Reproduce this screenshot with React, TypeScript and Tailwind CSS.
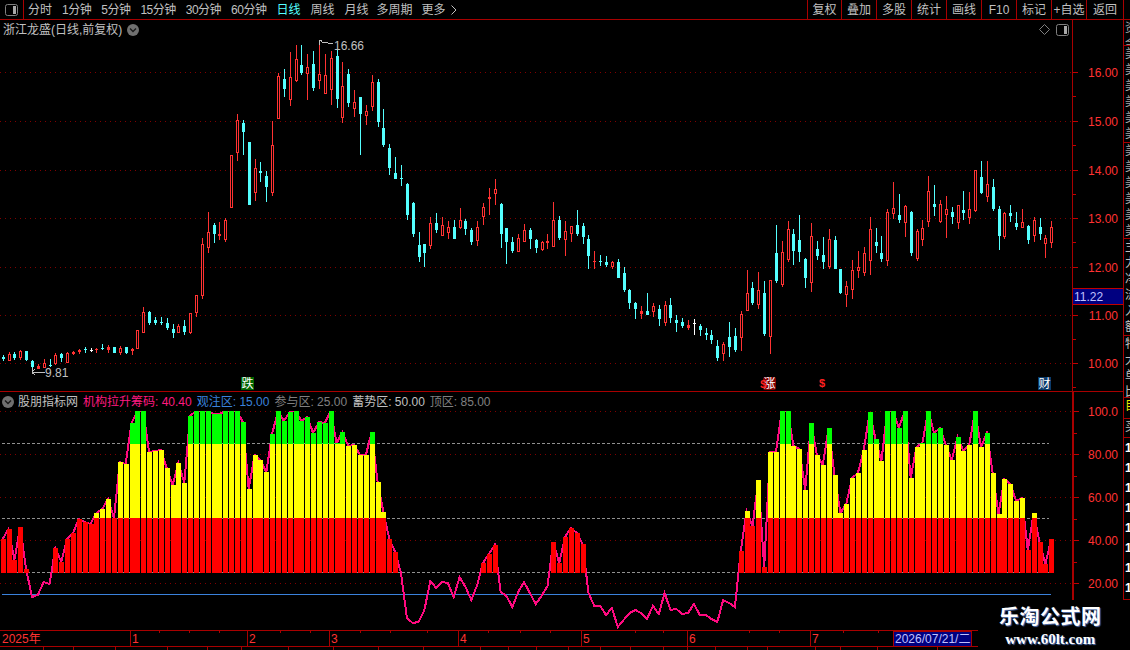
const STEP = 5.858;
const xAt = (i: number) => 2.67 + STEP * i;

type Candle = [number, number, number, number, number]; // wick top, body top, body bottom, wick bottom, 0 cyan / 1 red / 2 white

// traced off the chart, measured at 3x, each batch with its own y offset
const batchA: Candle[] = [
  [945,952,957,962,0],[937,942,962,962,1],[936,942,955,960,0],[930,934,955,960,1],[932,934,960,963,0],[960,963,980,1000,0],
  [972,978,986,988,1],[958,970,983,985,1],[958,975,977,980,0],[940,946,971,974,1],[938,942,954,966,0],[936,940,968,970,1],
  [932,935,941,945,1],[926,929,935,941,1],[922,926,931,938,0],[925,930,931,936,2],[925,926,930,938,1],[912,925,927,930,0],
  [916,921,929,938,1],[921,921,939,940,0],[919,925,939,945,1],[921,922,938,942,0],[925,926,932,945,1],[870,870,926,926,1],
  [801,817,878,878,1],[813,816,849,855,0],[832,840,849,854,0],[831,846,848,856,0],[835,850,864,870,0],[852,867,879,893,0],
  [853,859,878,880,1],[841,858,876,884,0],[820,820,880,882,1],[766,766,820,830,1],[594,612,767,777,1],[516,577,623,638,1],
  [549,555,582,608,0],[546,582,587,600,1],[535,540,600,605,1],[346,346,503,503,1],[222,240,338,362,1],[240,250,276,344,0],
  [306,306,495,495,0],[357,385,458,482,1],[366,393,399,426,0],[393,408,441,486,0],[243,316,458,467,1],[98,109,236,236,1],
  [87,117,147,171,0],[36,112,179,198,1],[15,58,124,126,1],[15,75,100,105,0],[42,82,101,180,1],[33,72,144,153,0],
  [5,103,122,147,1],[42,106,161,162,1],[33,54,150,195,1],[30,48,177,204,0],[67,139,233,249,1],[87,102,189,201,0],
  [150,186,206,231,1],[171,171,222,345,0],[195,213,228,255,1],[105,127,201,213,1],[117,126,246,261,0],[207,264,315,321,0],
  [312,324,384,405,0],[351,399,417,417,0],
];
const batchB: Candle[] = [
  [-15,24,27,48,0],[39,42,135,150,0],[96,99,192,201,0],[186,225,261,276,0],[222,222,249,291,0],[141,159,228,237,1],
  [129,159,180,189,0],[141,165,198,198,1],[153,171,189,207,1],[150,171,207,207,0],[114,150,174,177,1],[147,153,177,195,0],
  [174,180,216,225,0],[153,171,213,228,1],[99,111,141,165,1],[54,81,87,135,1],[27,57,72,105,1],[99,102,192,234,0],
  [174,174,216,282,0],[201,216,243,249,0],[192,204,246,246,1],[162,180,216,216,1],[174,180,207,237,0],[207,210,234,249,0],
  [213,216,240,243,1],[192,213,219,237,1],[96,150,231,231,1],[138,150,204,210,0],[153,183,210,258,1],[168,168,192,216,1],
  [120,165,192,198,0],[159,168,201,222,0],[195,207,258,297,0],[243,273,276,297,1],[255,273,276,288,0],[258,276,285,291,0],
  [273,276,291,297,1],[267,276,324,324,0],[291,309,360,366,0],[357,360,399,417,0],[396,399,417,447,0],[408,423,432,447,1],
  [369,423,435,435,0],[399,408,426,441,1],[405,417,447,468,0],[393,405,459,468,1],[384,405,444,459,0],[435,450,459,486,0],
  [444,456,468,474,0],[450,465,474,480,1],[447,459,462,495,2],[462,468,480,498,0],[474,489,495,510,0],[480,495,510,522,0],
  [510,528,564,573,0],[516,522,552,573,1],[456,501,531,561,0],[474,498,540,546,0],[423,432,504,543,1],[300,369,423,423,1],
  [336,354,399,405,0],[306,360,405,417,1],[333,369,492,498,0],[330,330,501,552,1],
];
const batchC: Candle[] = [
  [225,309,393,399,0],[273,306,405,411,1],[213,237,330,336,1],[237,252,303,345,0],[195,270,306,336,0],[324,327,384,414,0],
  [219,258,399,426,1],[273,297,318,330,0],[261,315,336,357,0],[237,267,351,357,1],[258,270,357,357,0],[357,357,429,432,0],
  [393,408,435,471,1],[330,360,421,447,1],[303,351,363,384,1],[291,309,369,378,1],[201,237,333,375,1],[234,276,288,309,0],
  [258,309,327,336,0],[177,186,333,348,1],[96,174,192,207,1],[132,195,210,219,0],[165,168,219,261,1],[183,186,309,318,0],
  [237,243,327,333,1],[210,234,270,288,1],[78,124,216,231,1],[105,162,171,198,0],[150,162,216,219,1],[138,177,195,264,1],
  [171,186,201,222,0],[165,165,219,237,1],[123,180,189,210,0],[126,177,204,222,1],[60,60,183,186,1],[33,81,129,132,0],
  [33,102,141,156,1],[87,111,177,183,0],[168,177,258,300,0],[186,189,261,267,1],[165,189,198,216,0],[186,219,231,240,0],
  [177,216,234,234,1],[225,228,270,282,0],[201,210,258,276,1],[204,231,252,270,0],[255,264,282,324,1],[213,231,279,294,1],
];

const toPage = (list: Candle[], off: number): Candle[] =>
  list.map(([a, b, c, d, k]) => [off + a / 3, off + b / 3, off + c / 3, off + d / 3, k].map(Math.round) as Candle);
const candles = [...toPage(batchA, 40), ...toPage(batchB, 170), ...toPage(batchC, 150)];

// indicator value per day, as page y (411 = 100, 572.5 = 25)
const flow = [
  539,529,560,527,569,597,595,582,584,548,562,539,533,519,522,524,513,509,499,518,
  462,464,423,411,411,452,451,450,468,485,463,483,416,411,411,411,414,414,411,411,
  411,422,489,455,460,472,434,411,421,412,411,421,417,433,422,423,411,443,432,446,
  445,455,455,432,482,512,539,552,573,618,623,622,610,581,588,582,583,597,577,587,
  600,585,563,554,545,592,596,607,592,582,593,604,596,586,542,563,537,528,533,544,
  593,606,606,615,608,627,620,613,610,613,619,606,614,593,610,609,614,613,604,615,
  615,619,622,600,603,607,551,511,526,480,567,452,452,411,411,446,449,490,423,455,
  465,428,475,513,504,478,473,450,412,439,461,411,411,428,411,478,447,443,411,433,
  428,445,460,437,451,445,411,447,433,473,514,479,484,501,498,550,513,542,564,539,
];

const priceGrid = [72, 121, 170, 218, 267, 315, 363];
const flowGrid = [411, 454, 497, 540, 583];

function PanelIcon() {
  return (
    <svg width="13" height="12" viewBox="0 0 13 12" shapeRendering="crispEdges">
      <rect x="8" y="2" width="3" height="8" fill="#a8a8a8" />
      <rect x="0.5" y="0.5" width="12" height="11" rx="2" fill="none" stroke="#808080" shapeRendering="auto" />
    </svg>
  );
}

function ChevronDot() {
  return (
    <svg width="12" height="12" viewBox="0 0 12 12">
      <circle cx="6" cy="6" r="6" fill="#707070" />
      <path d="M3 4.5 L6 7.5 L9 4.5" fill="none" stroke="#1a1a1a" strokeWidth="1.4" />
    </svg>
  );
}

function Toolbar() {
  const periods = [
    { label: '分时', cls: '' },
    { label: '1分钟', cls: 'tracking-[-0.5px]' },
    { label: '5分钟', cls: 'tracking-[-0.5px]' },
    { label: '15分钟', cls: 'tracking-[-0.5px]' },
    { label: '30分钟', cls: 'tracking-[-0.5px]' },
    { label: '60分钟', cls: 'tracking-[-0.5px]' },
    { label: '日线', cls: 'text-[#54ffff]' },
    { label: '周线', cls: '' },
    { label: '月线', cls: '' },
    { label: '多周期', cls: '-ml-[2px]' },
    { label: '更多', cls: '-ml-[1px]' },
  ];
  const tools = ['复权', '叠加', '多股', '统计', '画线', 'F10', '标记', '+自选'];
  return (
    <div className="flex h-[20px] justify-between border-b border-[#a80000] text-[#c0c0c0]">
      <div className="flex items-center">
        <div className="flex h-[19px] w-[24px] items-center justify-center border-r border-[#a80000]">
          <PanelIcon />
        </div>
        <div className="flex items-center gap-[10px] pl-[4px]">
          {periods.map((p) => (
            <span key={p.label} className={p.cls}>{p.label}</span>
          ))}
          <svg width="6" height="10" viewBox="0 0 6 10" className="-ml-[5px]">
            <path d="M0.5 0.5 L5 5 L0.5 9.5" fill="none" stroke="#c0c0c0" />
          </svg>
        </div>
      </div>
      <div className="flex">
        {tools.map((t, i) => (
          <div
            key={t}
            className={`flex items-center justify-center border-l border-[#a80000] ${i === 0 ? 'w-[34px]' : 'w-[35px]'}`}
          >
            {t}
          </div>
        ))}
        <div className="flex w-[37px] items-center justify-center border-l border-[#a80000]">返回</div>
        <div className="w-[7px] border-l border-[#a80000]" />
      </div>
    </div>
  );
}

function CandleMark({ c, i }: { c: Candle; i: number }) {
  const [wt, bt, bb, wb, kind] = c;
  const x0 = Math.round(xAt(i)) - 1;
  const color = kind === 1 ? '#ff3232' : kind === 2 ? '#ffffff' : '#54ffff';
  const h = Math.max(bb - bt, 1);
  if (kind === 1 && h > 3) {
    return (
      <g>
        <rect x={x0 + 1} y={wt} width="1" height={Math.max(bt - wt, 0)} fill={color} />
        <rect x={x0 + 1} y={bb} width="1" height={Math.max(wb - bb, 0)} fill={color} />
        <rect x={x0 + 0.5} y={bt + 0.5} width="2" height={h - 1} fill="#000" stroke={color} />
      </g>
    );
  }
  return (
    <g>
      <rect x={x0 + 1} y={wt} width="1" height={Math.max(wb - wt, 1)} fill={color} />
      <rect x={x0} y={bt} width="3" height={h} fill={color} />
    </g>
  );
}

function PricePanel() {
  return (
    <div className="relative h-[372px] border-b border-[#a80000]">
      <div className="flex h-[19px] items-center justify-between pl-[3px] pr-[3px] text-[#c0c0c0]">
        <div className="flex items-center gap-[5px]">
          <span>浙江龙盛(日线,前复权)</span>
          <ChevronDot />
        </div>
        <div className="flex items-center gap-[6px]">
          <svg width="11" height="11" viewBox="0 0 11 11">
            <path d="M5.5 0.5 L10.5 5.5 L5.5 10.5 L0.5 5.5 Z" fill="none" stroke="#808080" />
          </svg>
          <PanelIcon />
        </div>
      </div>
      <svg className="block" width="1072" height="352" viewBox="0 39 1072 352" shapeRendering="crispEdges">
        {priceGrid.map((y) => (
          <line key={y} x1="0" x2="1072" y1={y + 0.5} y2={y + 0.5} stroke="#800000" strokeDasharray="1 4" />
        ))}
        {candles.map((c, i) => (
          <CandleMark key={i} c={c} i={i} />
        ))}
        <path d="M319.5 45 V40 M319.5 40 H322 M320 40 L323 43 M323 42 L333 44" fill="none" stroke="#c0c0c0" />
        <text x="334" y="50" fill="#c0c0c0" fontSize="12">16.66</text>
        <path d="M32.5 368 V374 M32 372 H45 M32 372 L35 369 M32 372 L35 375" fill="none" stroke="#c0c0c0" />
        <text x="45" y="377" fill="#c0c0c0" fontSize="12">9.81</text>
      </svg>
      <span className="absolute left-[241px] top-[357px] flex h-[13px] w-[13px] items-center justify-center bg-[#006400] text-white">跌</span>
      <span className="absolute left-[763px] top-[357px] flex h-[13px] w-[13px] items-center justify-center rounded-[2px] bg-[#800000] text-white">涨</span>
      <span className="absolute left-[760px] top-[358px] text-[10px] font-bold leading-[13px] text-[#ff2020]">S</span>
      <span className="absolute left-[819px] top-[357px] text-[11px] font-bold leading-[13px] text-[#ff2020]">$</span>
      <span className="absolute left-[1038px] top-[357px] flex h-[13px] w-[13px] items-center justify-center bg-[#0a3a6a] text-white">财</span>
    </div>
  );
}

function FlowPanel() {
  const points = flow.map((y, i) => `${xAt(i).toFixed(1)},${y}`).join(' ');
  return (
    <div>
      <div className="flex h-[19px] items-center gap-[5px] pl-[2px] text-[#c0c0c0]">
        <ChevronDot />
        <span className="-ml-[1px]">股朋指标网</span>
        <span className="text-[#ff1a80]">机构拉升筹码: 40.40</span>
        <span className="text-[#3a82dc]">观注区: 15.00</span>
        <span className="text-[#808080]">参与区: 25.00</span>
        <span>蓄势区: 50.00</span>
        <span className="text-[#808080]">顶区: 85.00</span>
      </div>
      <svg className="block" width="1072" height="219" viewBox="0 411 1072 219" shapeRendering="crispEdges">
        {flowGrid.map((y) => (
          <line key={y} x1="0" x2="1072" y1={y + 0.5} y2={y + 0.5} stroke="#800000" strokeDasharray="1 4" />
        ))}
        {[443, 518, 572].map((y) => (
          <line key={y} x1="2" x2="1049" y1={y + 0.5} y2={y + 0.5} stroke="#909090" strokeDasharray="3 2" />
        ))}
        <line x1="2" x2="1051" y1="594.5" y2="594.5" stroke="#3a82dc" />
        <polyline points={points} fill="none" stroke="#ff0a80" strokeWidth="2" />
        {flow.map((y, i) => {
          if (y >= 573) return null;
          const x = Math.round(xAt(i)) - 2;
          return (
            <g key={i}>
              <rect x={x} y={Math.max(y, 518)} width="5" height={573 - Math.max(y, 518)} fill="#ff0000" />
              {y < 518 && <rect x={x} y={Math.max(y, 444)} width="5" height={518 - Math.max(y, 444)} fill="#ffff00" />}
              {y < 444 && <rect x={x} y={y} width="5" height={444 - y} fill="#00ff00" />}
            </g>
          );
        })}
      </svg>
    </div>
  );
}

function TimeAxis() {
  const months = [
    { x: 130, label: '1' },
    { x: 247, label: '2' },
    { x: 329, label: '3' },
    { x: 458, label: '4' },
    { x: 581, label: '5' },
    { x: 687, label: '6' },
    { x: 810, label: '7' },
  ];
  const minor = [159, 189, 219, 280, 310, 360, 390, 427, 488, 520, 550, 635, 663, 749, 779, 843, 878];
  const lower = [43, 73, 115, 167, 207, 241, 288, 333, 378, 423, 480, 508, 536, 568, 600, 630, 663, 687, 715, 747, 767, 815, 840, 877, 937];
  return (
    <svg className="block" width="1072" height="20" viewBox="0 630 1072 20" shapeRendering="crispEdges">
      <line x1="0" x2="978" y1="630.5" y2="630.5" stroke="#a80000" />
      <line x1="0" x2="978" y1="646.5" y2="646.5" stroke="#a80000" />
      {minor.map((x) => (
        <line key={x} x1={x + 0.5} x2={x + 0.5} y1="630" y2="633" stroke="#a80000" />
      ))}
      {lower.map((x) => (
        <line key={x} x1={x + 0.5} x2={x + 0.5} y1="646" y2="650" stroke="#a80000" />
      ))}
      <text x="2" y="643" fill="#ff3232" fontSize="12">2025年</text>
      {months.map((m) => (
        <g key={m.label}>
          <line x1={m.x + 0.5} x2={m.x + 0.5} y1="630" y2="646" stroke="#a80000" />
          <text x={m.x + 2} y="643" fill="#ff3232" fontSize="12">{m.label}</text>
        </g>
      ))}
      <rect x="893.5" y="631.5" width="78" height="15" fill="#000080" stroke="#a80000" />
      <text x="895" y="643" fill="#c0c0ff" fontSize="12">2026/07/21/二</text>
    </svg>
  );
}

function AxisColumn() {
  const prices = ['16.00', '15.00', '14.00', '13.00', '12.00', '11.00', '10.00'];
  const flows = ['100.0', '80.00', '60.00', '40.00', '20.00'];
  return (
    <div className="relative w-[51px]">
      <div className="h-[372px] border-l border-[#a80000]">
        <svg className="block" width="50" height="372" viewBox="1073 20 50 372" shapeRendering="crispEdges">
          {prices.map((p, i) => (
            <g key={p}>
              <line x1="1073" x2="1078" y1={priceGrid[i] + 0.5} y2={priceGrid[i] + 0.5} stroke="#c00000" />
              <line x1="1073" x2="1076" y1={priceGrid[i] + 24.5} y2={priceGrid[i] + 24.5} stroke="#c00000" />
              <text x="1118" y={priceGrid[i] + 5} textAnchor="end" fill="#ff3232" fontSize="12">{p}</text>
            </g>
          ))}
          <line x1="1072" x2="1123" y1="391.5" y2="391.5" stroke="#a80000" />
        </svg>
      </div>
      <div className="h-[208px] border-l-2 border-[#a80000]">
        <svg className="block" width="49" height="208" viewBox="1074 392 49 208" shapeRendering="crispEdges">
          {flows.map((f, i) => (
            <g key={f}>
              <line x1="1074" x2="1079" y1={flowGrid[i] + 0.5} y2={flowGrid[i] + 0.5} stroke="#c00000" />
              <line x1="1074" x2="1077" y1={flowGrid[i] + 22} y2={flowGrid[i] + 22} stroke="#c00000" />
              <text x="1118" y={flowGrid[i] + 5} textAnchor="end" fill="#ff3232" fontSize="12">{f}</text>
            </g>
          ))}
        </svg>
      </div>
      <div className="absolute left-[1px] top-[268px] flex h-[17px] w-[50px] items-center border-y border-[#c00000] bg-[#000080] pl-[1px] text-[#c0c0ff]">
        11.22
      </div>
    </div>
  );
}

function SideStrip() {
  const sections = [
    { h: 'h-[26px]', cls: 'text-[#a8a8a8]', rows: ['资', '金'] },
    { h: 'h-[97px]', cls: 'text-[#a8a8a8]', rows: ['美', '美', '美', '美', '美', '美'] },
    { h: 'h-[96px]', cls: 'text-[#a8a8a8]', rows: ['美', '美', '美', '美', '美', '美'] },
    { h: 'h-[97px]', cls: 'text-[#c0c0c0]', rows: ['主', '力', '净', '流', '入', '额'] },
    { h: 'h-[62px]', cls: 'text-[#c0c0c0]', rows: ['特', '大', '单', '比'] },
    { h: 'h-[21px]', cls: 'text-[#e8e800]', rows: ['目'] },
    { h: 'h-[19px]', cls: 'text-[#c0c0c0]', rows: ['买'] },
    { h: 'h-[162px]', cls: 'font-bold text-white', rows: ['1', '1', '1', '1', '1', '1', '1', '1'] },
  ];
  return (
    <div className="w-[7px] overflow-hidden">
      {sections.map((s, i) => (
        <div key={i} className={`${s.h} overflow-hidden border-b border-l border-[#a80000] pl-[1px] ${s.cls}`}>
          {s.rows.map((r, j) => (
            <div key={j} className={`whitespace-nowrap ${s.rows.length === 8 ? 'leading-[20px]' : 'leading-[16px]'}`}>{r}</div>
          ))}
        </div>
      ))}
    </div>
  );
}

export default function App() {
  return (
    <div className="relative h-[650px] w-[1130px] overflow-hidden bg-black font-['Liberation_Sans','Noto_Sans_CJK_SC',sans-serif] text-[12px]">
      <Toolbar />
      <div className="flex">
        <div className="w-[1072px]">
          <PricePanel />
          <FlowPanel />
          <TimeAxis />
        </div>
        <AxisColumn />
        <SideStrip />
      </div>
      <div className="absolute left-[999px] top-[604px] flex flex-col items-center text-white">
        <span className="text-[20px] font-bold leading-[26px] tracking-[0.5px] [text-shadow:1px_1px_1px_#5070b0]">乐淘公式网</span>
        <span className="font-['Liberation_Serif',serif] text-[15px] font-bold leading-[18px] [text-shadow:1px_1px_1px_#5070b0]">www.60lt.com</span>
      </div>
    </div>
  );
}
